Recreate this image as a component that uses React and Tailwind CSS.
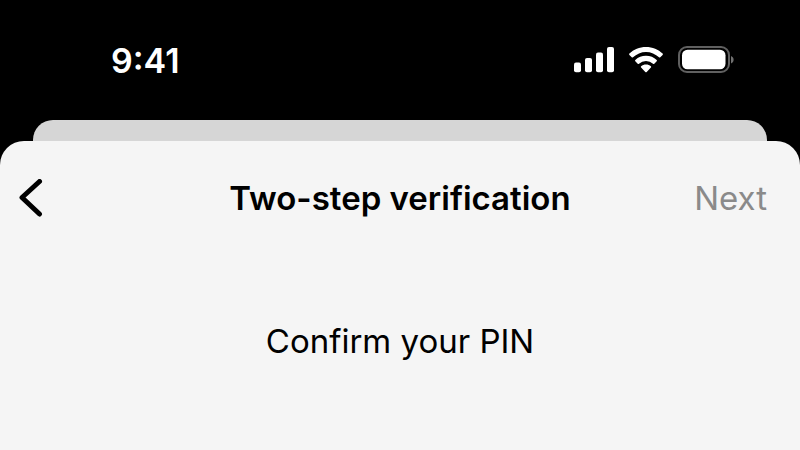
import React from 'react';

const SignalIcon = () => (
  <svg width="40" height="26" viewBox="0 0 40 26" fill="white" aria-label="Signal">
    <rect x="0" y="15.500" width="7" height="9.700" rx="2" />
    <rect x="11" y="11" width="7" height="14.200" rx="2" />
    <rect x="22" y="5.500" width="7" height="19.700" rx="2" />
    <rect x="33" y="0" width="7" height="25.200" rx="2" />
  </svg>
);

const WifiIcon = () => (
  <svg width="36" height="26" viewBox="0 0 36 26" fill="white" aria-label="Wi-Fi">
    <path d="M18 0c6.500 0 12.400 2.500 16.600 6.600.4.400.4 1 0 1.400l-2.300 2.300c-.4.400-.9.400-1.300 0a18.600 18.600 0 0 0-26 0c-.4.400-.9.400-1.300 0L1.400 8c-.4-.4-.4-1 0-1.400C5.600 2.500 11.500 0 18 0z" />
    <path d="M18 8.700c4.100 0 7.900 1.600 10.700 4.200.4.400.4 1 0 1.400l-2.400 2.400c-.4.400-.9.400-1.300 0a10.300 10.300 0 0 0-14 0c-.4.400-.9.400-1.300 0l-2.400-2.400c-.4-.4-.4-1 0-1.400A15.600 15.600 0 0 1 18 8.700z" />
    <path d="M18 17.500c1.900 0 3.600.7 4.900 1.700.4.400.4.900 0 1.300l-4.200 4.400c-.4.400-1 .4-1.400 0l-4.200-4.400c-.4-.4-.4-.9 0-1.300 1.300-1 3-1.700 4.900-1.700z" />
  </svg>
);

const BatteryIcon = () => (
  <svg width="57" height="28" viewBox="0 0 57 28" aria-label="Battery">
    <rect x="1" y="1" width="50" height="25" rx="8" fill="none" stroke="#606060" strokeWidth="2" />
    <rect x="4" y="3.700" width="43.500" height="19.600" rx="5.500" fill="white" />
    <path d="M53 10c3.500 1.300 3.500 6.200 0 7.500z" fill="#707070" />
  </svg>
);

const StatusBar = () => (
  <div className="flex items-center justify-between h-[120px] pl-[111px] pr-[65px] text-white">
    <span className="text-[34px] font-semibold">9:41</span>
    <div className="flex items-center gap-[14px]">
      <SignalIcon />
      <WifiIcon />
      <BatteryIcon />
    </div>
  </div>
);

const App = () => {
  return (
    <div className="flex flex-col min-h-screen bg-black text-black font-['Inter',sans-serif]">
      <StatusBar />
      <div className="h-[21px] mx-[33px] rounded-t-[20px] bg-[#d6d6d6]" />
      <main className="grow rounded-t-[24px] bg-[#f5f5f5]">
        <header className="grid grid-cols-[1fr_auto_1fr] items-center h-[116px] px-[18px]">
          <button type="button" aria-label="Back" className="justify-self-start">
            <svg width="26" height="40" viewBox="0 0 26 40" fill="none" stroke="currentColor" strokeWidth="5" strokeLinecap="round" strokeLinejoin="round">
              <path d="M21.500 2.500L4 18.500l17.500 16.500" />
            </svg>
          </button>
          <h1 className="text-[33px] font-semibold">Two-step verification</h1>
          <button type="button" disabled className="justify-self-end pr-[15px] text-[33px] text-[#8a8a8a]">Next</button>
        </header>
        <p className="mt-[60px] text-center text-[33px]">Confirm your PIN</p>
      </main>
    </div>
  );
};

export default App;
